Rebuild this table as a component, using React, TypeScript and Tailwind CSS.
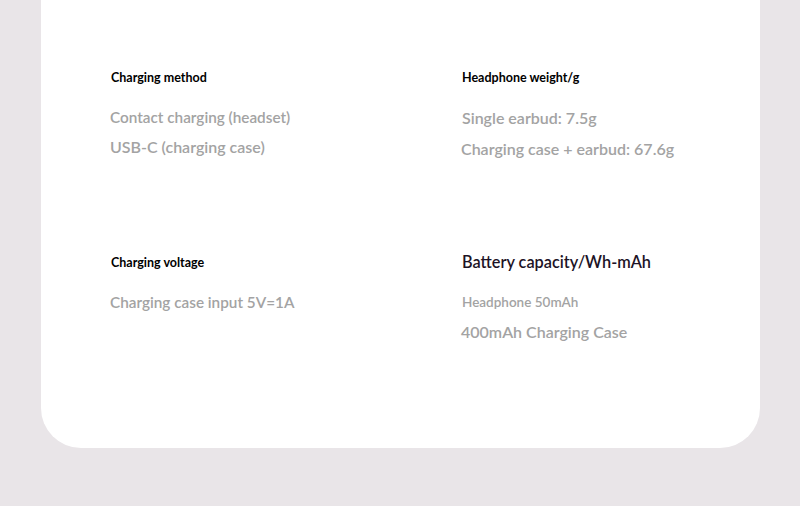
export default function App() {
  const val = "text-[#a3a3a3] font-semibold leading-[30px] whitespace-nowrap";
  const head = "text-[12.5px] font-bold text-black leading-[30px] whitespace-nowrap";
  return (
    <div className="w-[800px] h-[506px] bg-[#e9e5e8] overflow-hidden" style={{ fontFamily: "Lato, 'Open Sans', sans-serif" }}>
      <div className="ml-[41px] w-[719px] h-[448px] bg-white rounded-b-[40px] pt-[63px] pl-[69px]">
        <div className="flex h-[185px]">
          <div className="w-[352px] pl-[1px]">
            <div className={head}>Charging method</div>
            <div className={`mt-[9px] -ml-[1px] text-[15.3px] ${val}`}>Contact charging (headset)</div>
            <div className={`-ml-[1px] text-[16px] ${val}`}>USB-C (charging case)</div>
          </div>
          <div>
            <div className={head}>Headphone weight/g</div>
            <div className={`mt-[10px] text-[16px] ${val}`}>Single earbud: 7.5g</div>
            <div className={`mt-[1px] -ml-[1px] text-[16px] ${val}`}>Charging case + earbud: 67.6g</div>
          </div>
        </div>
        <div className="flex">
          <div className="w-[352px] pl-[1px]">
            <div className={head}>Charging voltage</div>
            <div className={`mt-[9px] -ml-[1px] text-[15.3px] ${val}`}>Charging case input 5V=1A</div>
          </div>
          <div className="-mt-[1px]">
            <div className="text-[16.3px] font-semibold text-[#1d1326] leading-[30px] whitespace-nowrap">Battery capacity/Wh-mAh</div>
            <div className={`mt-[10px] text-[13.5px] ${val}`}>Headphone 50mAh</div>
            <div className={`mt-[0px] -ml-[1px] text-[16px] ${val}`}>400mAh Charging Case</div>
          </div>
        </div>
      </div>
    </div>
  );
}
